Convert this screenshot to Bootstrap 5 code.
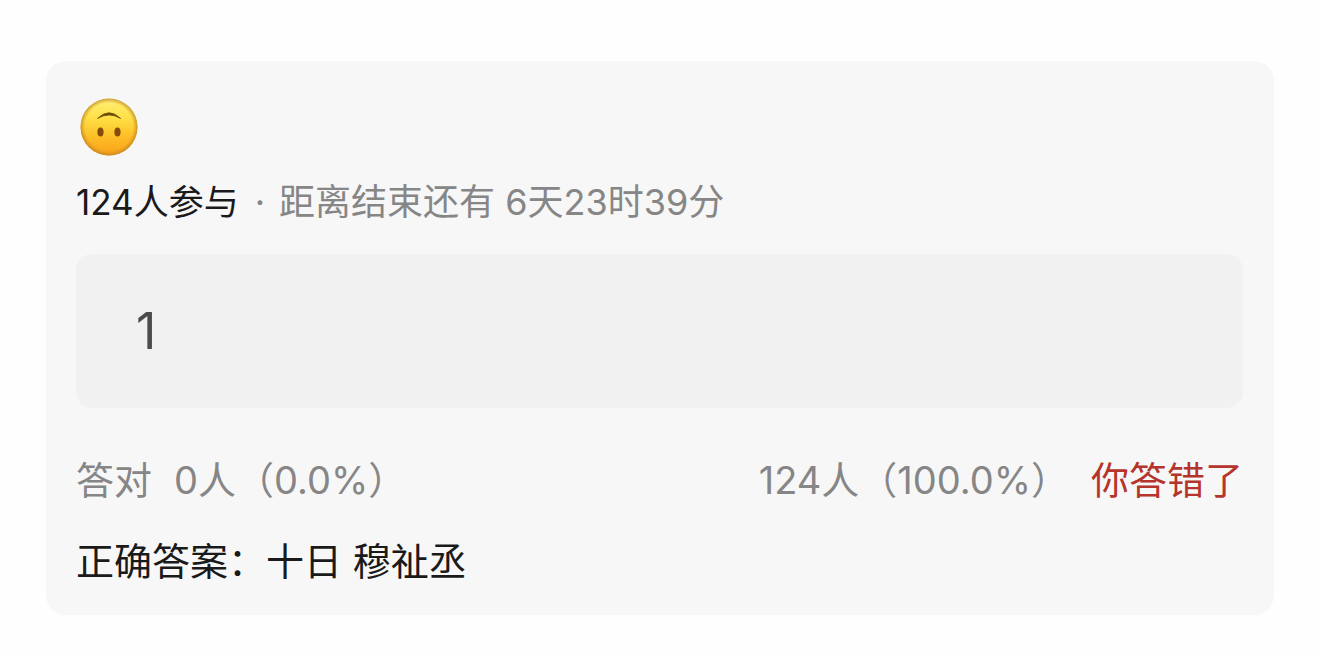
<!DOCTYPE html>
<html lang="zh-CN">
<head>
<meta charset="utf-8">
<meta name="viewport" content="width=device-width, initial-scale=1">
<title>答题结果</title>
<link href="https://cdn.jsdelivr.net/npm/bootstrap@5.3.0/dist/css/bootstrap.min.css" rel="stylesheet">
<style>
  body { font-family: Inter, "Noto Sans CJK SC", sans-serif; background: #fefefe; color: #1a1a1a; }
  .quiz-page { padding: 61px 46px 40px; }
  .quiz-card { background: #f7f7f7; border: 0; border-radius: 20px; padding: 36px 31px 28px 30px; }
  .quiz-emoji { width: 60px; height: 60px; margin-left: 3px; }
  .quiz-meta { font-size: 36px; line-height: 48px; margin-top: 21px; color: #868686; }
  .quiz-meta strong { font-size: 35px; font-weight: 400; color: #1a1a1a; }
  .quiz-dot { margin: 0 14px 0 16px; }
  .quiz-answer, .quiz-answer:focus { background: #f1f1f1; color: #4c4c4c; }
  .quiz-answer { border: 0; border-radius: 16px; height: 154px; padding: 0 60px; margin-top: 28px; font-size: 50px; }
  .quiz-stats { font-size: 38px; line-height: 52px; margin-top: 46px; color: #868686; }
  .quiz-pair { display: flex; gap: 22px; }
  .quiz-wrong { color: #b5342c; }
  .quiz-correct { font-size: 38px; line-height: 52px; margin-top: 29px; }
</style>
</head>
<body>
<main class="container-fluid quiz-page">
  <section class="card quiz-card">
    <svg class="quiz-emoji" viewBox="0 0 60 60" role="img" aria-label="倒脸">
      <defs>
        <linearGradient id="face" x1="0" y1="0" x2="0" y2="1"><stop offset="0" stop-color="#fff078"/><stop offset=".35" stop-color="#ffdf45"/><stop offset=".7" stop-color="#fdbb24"/><stop offset="1" stop-color="#f9a01c"/></linearGradient>
        <radialGradient id="rim"><stop offset=".84" stop-color="#c98a1c" stop-opacity="0"/><stop offset="1" stop-color="#b98225" stop-opacity=".75"/></radialGradient>
      </defs>
      <circle cx="30" cy="30" r="28.500" fill="url(#face)"/>
      <circle cx="30" cy="30" r="28.500" fill="url(#rim)"/>
      <path d="M18.500 21.500Q30 10 41.700 21.500Q30 14.500 18.500 21.500Z" fill="#6b4f08" stroke="#6b4f08" stroke-width=".7" stroke-linejoin="round"/>
      <ellipse cx="21.500" cy="35" rx="3.100" ry="4.600" fill="#854a0c"/>
      <ellipse cx="38.500" cy="35" rx="3.100" ry="4.600" fill="#854a0c"/>
    </svg>
    <div class="quiz-meta d-flex flex-wrap"><strong>124人参与</strong><span class="quiz-dot">·</span><span>距离结束还有 6天23时39分</span></div>
    <input class="form-control quiz-answer" type="text" value="1" aria-label="你的答案" readonly>
    <div class="quiz-stats d-flex flex-wrap justify-content-between">
      <div class="quiz-pair"><span>答对</span><span>0人（0.0%）</span></div>
      <div class="quiz-pair"><span>124人（100.0%）</span><span class="quiz-wrong">你答错了</span></div>
    </div>
    <div class="quiz-correct">正确答案：十日 穆祉丞</div>
  </section>
</main>
<script src="https://cdn.jsdelivr.net/npm/bootstrap@5.3.0/dist/js/bootstrap.bundle.min.js"></script>
</body>
</html>
